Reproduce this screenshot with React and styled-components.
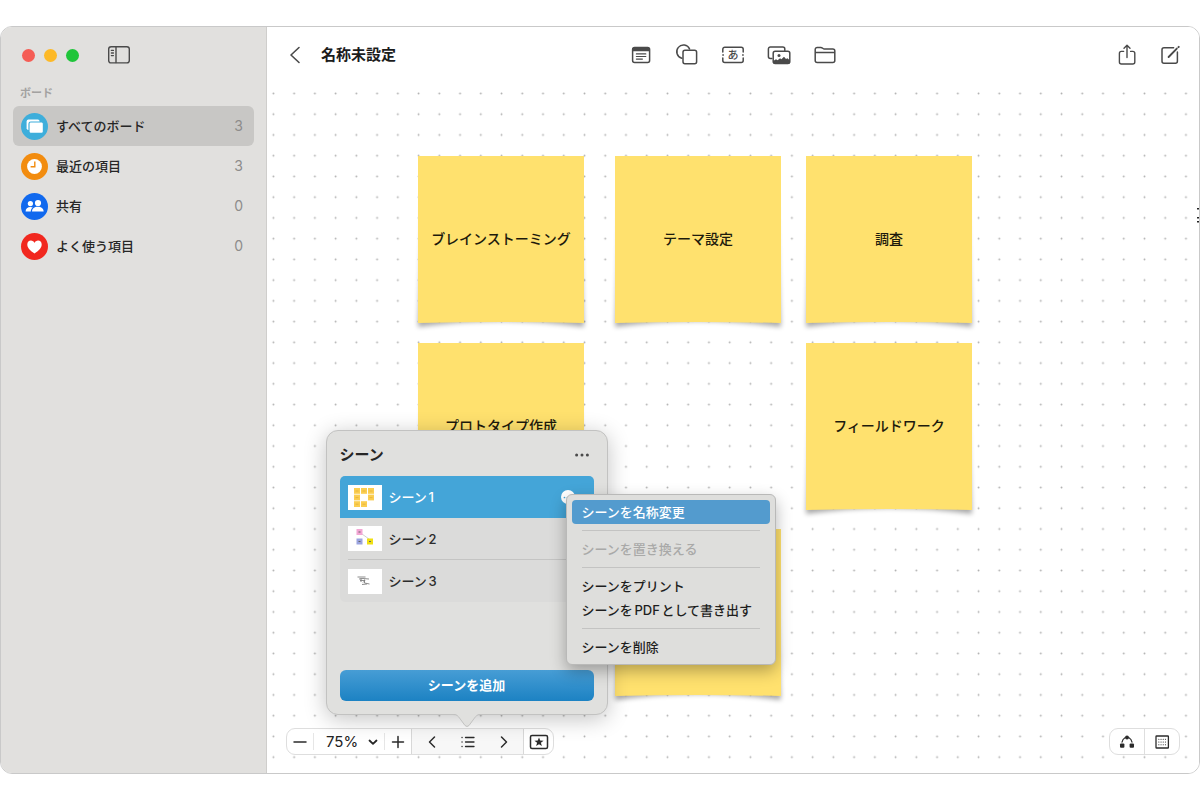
import React from 'react';
import styled, { createGlobalStyle, css } from 'styled-components';

const GlobalStyle = createGlobalStyle`
	*, *::before, *::after {
		box-sizing: border-box;
	}

	body {
		margin: 0;
		background: #fff;
		color: #262626;
		font-family: Inter, 'Noto Sans CJK JP', sans-serif;
		font-size: 13px;
		line-height: 20px;
		text-autospace: normal;
	}

	button, select {
		font: inherit;
		color: inherit;
		padding: 0;
		border: 0;
		background: none;
		text-autospace: normal;
	}

	h1, h2, ul, p {
		margin: 0;
		padding: 0;
		list-style: none;
	}

	svg {
		display: block;
	}
`;

const Page = styled.div`
	padding: 26px 0;
`;

const Window = styled.div`
	position: relative;
	display: flex;
	min-height: calc(100vh - 52px);
	border: 1px solid #c9c9c9;
	border-radius: 12px;
	overflow: hidden;
`;

// sidebar
const Sidebar = styled.nav`
	width: 266px;
	flex-shrink: 0;
	padding: 0 12px;
	background: #e1e0de;
	border-right: 1px solid #cfcecc;
`;

const SidebarTop = styled.div`
	display: flex;
	align-items: center;
	gap: 9px;
	height: 56px;
	padding-left: 9px;
`;

const TrafficLight = styled.button`
	width: 13px;
	height: 13px;
	border-radius: 50%;
	background: ${(props) => props.$color};
`;

const IconButton = styled.button`
	display: flex;
	align-items: center;
	justify-content: center;
	width: 24px;
	height: 24px;
	color: #4a4a4a;
`;

const SidebarToggle = styled(IconButton)`
	margin-left: 19px;
`;

const GroupLabel = styled.p`
	height: 23px;
	padding-left: 7px;
	font-size: 11px;
	font-weight: 700;
	color: #a3a2a1;
`;

const BoardButton = styled.button`
	display: flex;
	align-items: center;
	width: 100%;
	height: 40px;
	padding: 0 11px 0 8px;
	border-radius: 6px;
	text-align: left;
	font-weight: 500;
	background: ${(props) => (props.$active ? '#c8c7c5' : 'transparent')};
`;

const BoardIcon = styled.span`
	display: flex;
	width: 27px;
	height: 27px;
	border-radius: 50%;
	background: ${(props) => props.$color};
`;

const BoardName = styled.span`
	flex: 1;
	padding-left: 8px;
`;

const Count = styled.span`
	font-size: 14px;
	font-weight: 400;
	color: #8d8c8b;
`;

// main area
const Main = styled.main`
	flex: 1;
	display: flex;
	flex-direction: column;
	min-width: 0;
	background: #fff;
`;

const Toolbar = styled.header`
	display: grid;
	grid-template-columns: 1fr auto 1fr;
	align-items: center;
	height: 56px;
	padding: 0 17px 0 16px;
`;

const ToolbarGroup = styled.div`
	display: flex;
	align-items: center;
	gap: ${(props) => props.$gap}px;
	justify-content: ${(props) => props.$justify || 'flex-start'};
`;

const Title = styled.h1`
	font-size: 15px;
	font-weight: 700;
	color: #1c1c1c;
`;

const Canvas = styled.div`
	position: relative;
	flex: 1;
`;

const DotGrid = styled.svg`
	position: absolute;
	inset: 0;
	width: 100%;
	height: 100%;
`;

// tail of an item that runs past the right edge
const EdgeMarks = styled.svg`
	position: absolute;
	right: 0;
	top: 125px;
`;

const Note = styled.div`
	position: absolute;
	left: ${(props) => props.$x}px;
	top: ${(props) => props.$y}px;
	width: 166px;
	height: 167px;
`;

const NotePaper = styled.svg`
	position: absolute;
	left: -12px;
	top: -12px;
	overflow: visible;
`;

const NoteText = styled.p`
	position: relative;
	line-height: 166px;
	text-align: center;
	font-size: 14px;
	font-weight: 500;
	color: #1d1a0c;
`;

// bars floating over the bottom of the canvas
const BottomBar = styled.div`
	position: absolute;
	left: 19px;
	right: 19px;
	bottom: 18px;
	display: flex;
	justify-content: space-between;
`;

const Pill = styled.div`
	display: flex;
	height: 27px;
	border: 1px solid #dedede;
	border-radius: 9px;
	background: #fff;
`;

const PillButton = styled.button`
	display: flex;
	align-items: center;
	justify-content: center;
	width: ${(props) => props.$width}px;
	color: #2b2b2b;
	${(props) =>
		props.$divided &&
		css`
			border-right: 1px solid #dedede;
		`}
`;

const ZoomLabel = styled.label`
	position: relative;
	display: flex;
	align-items: center;
	width: 72px;
	margin: 4px 0;
	border-left: 1px solid #e6e6e6;
	border-right: 1px solid #e6e6e6;

	svg {
		position: absolute;
		right: 6px;
		pointer-events: none;
	}
`;

const ZoomSelect = styled.select`
	width: 100%;
	padding-left: 12px;
	appearance: none;
	font-size: 15px;
	color: #222;
`;

const SceneNav = styled.div`
	position: relative;
	display: flex;
	justify-content: center;
	width: 113px;
	background: #f7f7f7;
	border-left: 1px solid #d8d8d8;
	border-right: 1px solid #d8d8d8;
`;

const Popover = styled.section`
	position: absolute;
	left: 50%;
	bottom: 39px;
	width: 282px;
	height: 285px;
	margin-left: -142px;
	padding: 12px 13px 13px;
	display: flex;
	flex-direction: column;
	background: #e0e0de;
	border: 1px solid #c2c2c1;
	border-radius: 12px;
	box-shadow: 0 4px 22px rgba(0, 0, 0, 0.24);
`;

const PopoverArrow = styled.svg`
	position: absolute;
	left: 50%;
	top: 100%;
	margin: -1px 0 0 -14px;
`;

const PopoverHeader = styled.div`
	display: flex;
	align-items: center;
	justify-content: space-between;
	height: 24px;
	margin-bottom: 9px;

	h2 {
		font-size: 15px;
		font-weight: 700;
	}
`;

const SceneList = styled.ul`
	border-radius: 5px;
	background: #dbdbda;
`;

const SceneItem = styled.li`
	position: relative;
	height: 42px;
	padding: 0 8px;
	border-radius: ${(props) => (props.$active ? '5px 5px 0 0' : '0')};
	background: ${(props) => (props.$active ? '#44a5d8' : 'transparent')};
	color: ${(props) => (props.$active ? '#fff' : '#2c2c2c')};
`;

const SceneButton = styled.button`
	display: flex;
	align-items: center;
	gap: 7px;
	width: 100%;
	height: 42px;
	font-weight: 500;
	border-bottom: ${(props) => (props.$line ? '1px solid #c4c4c3' : '0')};
`;

const SceneMore = styled.button`
	position: absolute;
	right: 19px;
	top: 14px;
	display: flex;
	align-items: center;
	justify-content: center;
	width: 14px;
	height: 14px;
	border-radius: 50%;
	background: #fff;
	color: #44a5d8;
`;

const AddButton = styled.button`
	height: 31px;
	margin-top: auto;
	padding-bottom: 2px;
	border-radius: 6px;
	font-weight: 700;
	color: #fff;
	background: linear-gradient(#479dd5, #1c82c3);
`;

const Menu = styled.div`
	position: absolute;
	left: 226px;
	top: 18px;
	z-index: 1;
	width: 210px;
	padding: 5px;
	display: flex;
	flex-direction: column;
	background: #dededc;
	border: 1px solid #b9b9b8;
	border-radius: 6px;
	box-shadow: 0 6px 16px rgba(0, 0, 0, 0.3);
`;

const MenuItem = styled.button`
	height: 24px;
	padding: 0 10px;
	border-radius: 4px;
	text-align: left;
	white-space: nowrap;
	font-weight: 500;
	color: #1e1e1e;

	&:disabled {
		color: #a9a9a8;
	}

	${(props) =>
		props.$active &&
		css`
			background: #539bce;
			color: #fff;
		`}
`;

const MenuLine = styled.hr`
	width: 178px;
	height: 1px;
	margin: 6px 10px;
	border: 0;
	background: #c3c3c2;
`;

const Stroke = ({ width = 24, height = 24, weight = 1.5, children }) => (
	<svg
		width={width}
		height={height}
		viewBox={`0 0 ${width} ${height}`}
		fill="none"
		stroke="currentColor"
		strokeWidth={weight}
		strokeLinecap="round"
		strokeLinejoin="round"
	>
		{children}
	</svg>
);

const SidebarIcon = () => (
	<Stroke weight={1.4}>
		<rect x="1.7" y="3.7" width="20.6" height="16.2" rx="2.4" />
		<path d="M9 4v15.6M4.4 7.4h2M4.4 10h2M4.4 12.6h2" />
	</Stroke>
);

const NoteIcon = () => (
	<Stroke>
		<rect x="3.6" y="4.4" width="17" height="15" rx="2" />
		<path d="M4 5h16v3.2H4z" fill="currentColor" stroke="none" />
		<path d="M7.400 10.900h9.400M7.400 13.500h9.400M7.400 16.100h6" strokeWidth="1.200" />
	</Stroke>
);

const ShapesIcon = () => (
	<Stroke>
		<path d="M6.800 15.200A6.700 6.700 0 1 1 14.600 6" />
		<rect x="8" y="7.200" width="13.600" height="13.600" rx="2" />
	</Stroke>
);

const TextBoxIcon = () => (
	<Stroke>
		<path d="M1.800 9V6.200a2 2 0 0 1 2-2h16.400a2 2 0 0 1 2 2V9M1.800 15v2.600a2 2 0 0 0 2 2h16.400a2 2 0 0 0 2-2V15" />
		<path d="M1.800 12h.6M21.600 12h.6" />
		<text
			x="12"
			y="16"
			fontSize="11"
			fontWeight="500"
			textAnchor="middle"
			fill="currentColor"
			stroke="none"
		>
			あ
		</text>
	</Stroke>
);

const MediaIcon = () => (
	<Stroke>
		<path d="M4.800 15.600H3.400a2 2 0 0 1-2-2V6a2 2 0 0 1 2-2h12.400a2 2 0 0 1 2 2v1.600" />
		<rect x="6.200" y="8.200" width="16.600" height="12.400" rx="2" />
		<path
			d="M6.600 17.800l2.400-1.600 1.600 1 2.400-2 1.400 1 2.600-2.400 2 2.200 1.400-.8 2.400 2v3.400H6.600z"
			fill="currentColor"
			stroke="none"
		/>
		<circle cx="12" cy="12.400" r="1.500" fill="currentColor" stroke="none" />
	</Stroke>
);

const FolderIcon = () => (
	<Stroke>
		<path d="M2.200 17.400V6.400a2 2 0 0 1 2-2h3.600c1.800 0 2 1.600 3.600 1.600h8.400a2 2 0 0 1 2 2v9.400a2 2 0 0 1-2 2H4.200a2 2 0 0 1-2-2zM2.400 9.600h19.200" />
	</Stroke>
);

const ShareIcon = () => (
	<Stroke weight={1.4}>
		<path d="M8.600 8.400H6.400a2 2 0 0 0-2 2v8.600a2 2 0 0 0 2 2h11.400a2 2 0 0 0 2-2v-8.600a2 2 0 0 0-2-2h-2.200M12 14.600V2.400M9 5.200L12 2.200l3 3" />
	</Stroke>
);

const ComposeIcon = () => (
	<Stroke>
		<path d="M15.600 4.800H6a2 2 0 0 0-2 2v11.400a2 2 0 0 0 2 2h11.400a2 2 0 0 0 2-2V9" />
		<path d="M10.600 14l8.200-8.400M20.400 4.200l.4-.4" strokeWidth="1.900" />
	</Stroke>
);

const Dots = ({ size = 16 }) => (
	<svg width={size} height={size} viewBox="0 0 16 16" fill="currentColor">
		<circle cx="2.600" cy="8" r="1.500" />
		<circle cx="8" cy="8" r="1.500" />
		<circle cx="13.400" cy="8" r="1.500" />
	</svg>
);

const BoardsGlyph = () => (
	<svg width="27" height="27" viewBox="0 0 27 27">
		<rect x="5.600" y="6.600" width="13" height="10.400" rx="1.800" fill="#fff" />
		<rect
			x="8"
			y="9"
			width="14.400"
			height="11.400"
			rx="1.800"
			fill="#fff"
			stroke="#3eaedb"
			strokeWidth="1.200"
		/>
	</svg>
);

const ClockGlyph = () => (
	<svg width="27" height="27" viewBox="0 0 27 27">
		<circle cx="13.500" cy="13.500" r="7.400" fill="#fff" />
		<path d="M13.800 8.600v5.200H9.600" fill="none" stroke="#f28c0f" strokeWidth="1.400" />
	</svg>
);

const PeopleGlyph = () => (
	<svg width="27" height="27" viewBox="0 0 27 27" fill="#fff">
		<circle cx="9.400" cy="10.600" r="2.600" />
		<circle cx="17" cy="10" r="3.100" />
		<path d="M4.600 18.600c0-3 2-4.600 4.800-4.600 1 0 1.800.2 2.400.6-1.400 1-2 2.400-2 4z" />
		<path d="M11 18.600c0-3 2.400-4.800 5.800-4.800s5.800 1.800 5.800 4.800z" />
	</svg>
);

const HeartGlyph = () => (
	<svg width="27" height="27" viewBox="0 0 27 27" fill="#fff">
		<path d="M13.500 20.600C8.600 17.200 6.300 14.500 6.300 11.500c0-2.300 1.600-3.900 3.600-3.900 1.600 0 2.900.9 3.600 2.300.7-1.400 2-2.300 3.600-2.300 2 0 3.600 1.600 3.600 3.900 0 3-2.300 5.700-7.200 9.100z" />
	</svg>
);

const SceneThumb = ({ kind }) => (
	<svg width="34" height="25" viewBox="0 0 34 25">
		<rect width="34" height="25" fill="#fff" />
		{kind === 1 &&
			[
				[6, 3],
				[13, 3],
				[20, 3],
				[6, 9.6],
				[20, 9.6],
				[6, 16.2],
				[13, 16.2],
			].map(([x, y]) => (
				<g key={`${x}-${y}`}>
					<rect x={x} y={y} width="6" height="5.800" fill="#fbce50" />
					<path d={`M${x + 1.5} ${y + 3}h3`} stroke="#e3b03a" strokeWidth=".8" />
				</g>
			))}
		{kind === 2 && (
			<>
				<path d="M14 8l7 5" stroke="#bbb" strokeWidth=".7" />
				<rect x="8.500" y="3" width="6" height="6" fill="#f3a6d4" />
				<rect x="8.500" y="12.500" width="6" height="6" fill="#9ba4e0" />
				<rect x="19" y="12.500" width="6" height="6" fill="#f0e012" />
				<path d="M10.500 6h2M10.500 15.500h2M21 15.500h2" stroke="#666" strokeWidth="1.200" />
			</>
		)}
		{kind === 3 && (
			<path
				d="M9.500 8h8M11 10l4-.5 6 .5M13 9v4M12 11.500h5l-2 2M16.500 10.500v3.500l5 1M14 15.500l5-.5"
				fill="none"
				stroke="#808080"
				strokeWidth=".9"
			/>
		)}
	</svg>
);

const boards = [
	{ name: 'すべてのボード', count: 3, color: '#3eaedb', Glyph: BoardsGlyph },
	{ name: '最近の項目', count: 3, color: '#f28c0f', Glyph: ClockGlyph },
	{ name: '共有', count: 0, color: '#1169ee', Glyph: PeopleGlyph },
	{ name: 'よく使う項目', count: 0, color: '#f1281f', Glyph: HeartGlyph },
];

const tools = [
	{ name: '付箋', Icon: NoteIcon },
	{ name: '図形', Icon: ShapesIcon },
	{ name: 'テキスト', Icon: TextBoxIcon },
	{ name: 'メディア', Icon: MediaIcon },
	{ name: 'ファイル', Icon: FolderIcon },
];

// places on the free canvas
const notes = [
	{ text: 'ブレインストーミング', x: 151, y: 73 },
	{ text: 'テーマ設定', x: 348, y: 73 },
	{ text: '調査', x: 539, y: 73 },
	{ text: 'プロトタイプ作成', x: 151, y: 260 },
	{ text: 'フィールドワーク', x: 539, y: 260 },
	{ text: '', x: 348, y: 446 },
];

const StickyNote = ({ text, x, y }) => (
	<Note $x={x} $y={y}>
		<NotePaper width="190" height="195" aria-hidden="true">
			<path
				d="M18 20h154l6 163q-83-12-166 0z"
				fill="#000"
				opacity=".34"
				filter="url(#note-shadow)"
			/>
			<path d="M12 12h166v167q-83-2-166 0z" fill="#ffe16e" />
		</NotePaper>
		<NoteText>{text}</NoteText>
	</Note>
);

const ContextMenu = () => (
	<Menu role="menu">
		<MenuItem role="menuitem" $active>
			シーンを名称変更
		</MenuItem>
		<MenuLine />
		<MenuItem role="menuitem" disabled>
			シーンを置き換える
		</MenuItem>
		<MenuLine />
		<MenuItem role="menuitem">シーンをプリント</MenuItem>
		<MenuItem role="menuitem">シーンをPDFとして書き出す</MenuItem>
		<MenuLine />
		<MenuItem role="menuitem">シーンを削除</MenuItem>
	</Menu>
);

const ScenePopover = () => (
	<Popover>
		<PopoverHeader>
			<h2>シーン</h2>
			<IconButton aria-label="シーンのオプション">
				<Dots />
			</IconButton>
		</PopoverHeader>
		<SceneList>
			{[1, 2, 3].map((n) => (
				<SceneItem key={n} $active={n === 1}>
					<SceneButton $line={n === 2}>
						<SceneThumb kind={n} />
						<span>{`シーン${n}`}</span>
					</SceneButton>
					{n === 1 && (
						<>
							<SceneMore aria-label="シーン1のオプション">
								<Dots size={9} />
							</SceneMore>
							<ContextMenu />
						</>
					)}
				</SceneItem>
			))}
		</SceneList>
		<AddButton>シーンを追加</AddButton>
		<PopoverArrow width="28" height="16" viewBox="0 0 28 16">
			<path d="M0 0h28v1c-4 0-5 2-6.500 4L16 12.500q-2 2-4 0L6.500 5C5 3 4 1 0 1z" fill="#e0e0de" />
			<path
				d="M0 1.500c4 0 5 1.500 6.500 3.500L12 12.500q2 2 4 0L21.500 5c1.500-2 2.500-3.500 6.500-3.500"
				fill="none"
				stroke="#c2c2c1"
			/>
		</PopoverArrow>
	</Popover>
);

const App = () => {
	return (
		<Page>
			<GlobalStyle />
			<Window>
				<Sidebar>
					<SidebarTop>
						<TrafficLight $color="#f55d55" aria-label="閉じる" />
						<TrafficLight $color="#fdb927" aria-label="しまう" />
						<TrafficLight $color="#1fc53a" aria-label="拡大" />
						<SidebarToggle aria-label="サイドバー">
							<SidebarIcon />
						</SidebarToggle>
					</SidebarTop>
					<GroupLabel>ボード</GroupLabel>
					{boards.map(({ name, count, color, Glyph }, index) => (
						<BoardButton key={name} $active={index === 0}>
							<BoardIcon $color={color}>
								<Glyph />
							</BoardIcon>
							<BoardName>{name}</BoardName>
							<Count>{count}</Count>
						</BoardButton>
					))}
				</Sidebar>

				<Main>
					<Toolbar>
						<ToolbarGroup $gap={14}>
							<IconButton aria-label="戻る">
								<Stroke weight={1.6}>
									<path d="M16 4.500L8 12l8 7.500" />
								</Stroke>
							</IconButton>
							<Title>名称未設定</Title>
						</ToolbarGroup>
						<ToolbarGroup $gap={22}>
							{tools.map(({ name, Icon }) => (
								<IconButton key={name} aria-label={name}>
									<Icon />
								</IconButton>
							))}
						</ToolbarGroup>
						<ToolbarGroup $gap={19} $justify="flex-end">
							<IconButton aria-label="共有">
								<ShareIcon />
							</IconButton>
							<IconButton aria-label="新規ボード">
								<ComposeIcon />
							</IconButton>
						</ToolbarGroup>
					</Toolbar>

					<Canvas>
						<DotGrid aria-hidden="true">
							<defs>
								<pattern
									id="dots"
									x="-4"
									y="0.1"
									width="20.74"
									height="20.74"
									patternUnits="userSpaceOnUse"
								>
									<circle cx="10.400" cy="10.400" r=".95" fill="#b0b0b0" />
								</pattern>
								<filter id="note-shadow" x="-10%" y="-10%" width="120%" height="120%">
									<feGaussianBlur stdDeviation="2.800" />
								</filter>
							</defs>
							<rect width="100%" height="100%" fill="url(#dots)" />
						</DotGrid>
						{notes.map((note) => (
							<StickyNote key={`${note.x}-${note.y}`} {...note} />
						))}
						<EdgeMarks width="2" height="16" fill="#222" aria-hidden="true">
							<rect y="0" width="2" height="1.500" />
							<rect y="9" width="2" height="1.500" />
							<rect y="13" width="2" height="1.500" />
						</EdgeMarks>

						<BottomBar>
							<Pill>
								<PillButton $width={26} aria-label="縮小">
									<Stroke width={16} height={16}>
										<path d="M2 8h12" />
									</Stroke>
								</PillButton>
								<ZoomLabel>
									<ZoomSelect aria-label="倍率" defaultValue="75">
										<option value="75">75%</option>
										<option value="100">100%</option>
									</ZoomSelect>
									<Stroke width={10} height={10} weight={1.8}>
										<path d="M1.500 3.500L5 6.800l3.500-3.300" />
									</Stroke>
								</ZoomLabel>
								<PillButton $width={26} aria-label="拡大表示">
									<Stroke width={16} height={16}>
										<path d="M2.500 8h11M8 2.500v11" />
									</Stroke>
								</PillButton>
								<SceneNav>
									<PillButton $width={36} aria-label="前のシーン">
										<Stroke width={16} height={16}>
											<path d="M10.500 3L5.500 8l5 5" />
										</Stroke>
									</PillButton>
									<PillButton $width={36} aria-label="シーンのリスト">
										<Stroke width={16} height={16} weight={1.3}>
											<path d="M5.500 3.500h8.500M5.500 8h8.500M5.500 12.500h8.500M2 3.500h.1M2 8h.1M2 12.500h.1" />
										</Stroke>
									</PillButton>
									<PillButton $width={36} aria-label="次のシーン">
										<Stroke width={16} height={16}>
											<path d="M5.500 3l5 5-5 5" />
										</Stroke>
									</PillButton>
									<ScenePopover />
								</SceneNav>
								<PillButton $width={29} aria-label="シーンを保存">
									<Stroke width={20} height={16} weight={1.5}>
										<rect x="1.500" y="1.500" width="17" height="13" rx="1.500" />
										<path
											d="M10 3.400l1.200 3.200 3.400.1-2.700 2.100 1 3.300L10 10.200l-2.900 1.900 1-3.300-2.700-2.100 3.400-.1z"
											fill="currentColor"
											stroke="none"
										/>
									</Stroke>
								</PillButton>
							</Pill>

							<Pill>
								<PillButton $width={35} $divided aria-label="コネクタ">
									<Stroke width={16} height={16} weight={1.2}>
										<path d="M6 3.800C4.200 4.800 3.400 6.200 3 8.200M10 3.800c1.800 1 2.600 2.400 3 4.400" />
										<circle cx="8" cy="3.400" r="2" fill="currentColor" stroke="none" />
										<rect x="1" y="9.400" width="4.400" height="4.400" rx="1" fill="currentColor" stroke="none" />
										<rect x="10.600" y="9.400" width="4.400" height="4.400" rx="1" fill="currentColor" stroke="none" />
									</Stroke>
								</PillButton>
								<PillButton $width={34} aria-label="グリッド">
									<Stroke width={16} height={16} weight={1.3}>
										<rect x="2" y="2" width="12.400" height="12" rx=".6" />
										<path
											d="M4.800 5.200h7M4.800 8h7M4.800 10.800h7"
											strokeWidth="1.100"
											strokeDasharray=".1 2.100"
										/>
									</Stroke>
								</PillButton>
							</Pill>
						</BottomBar>
					</Canvas>
				</Main>
			</Window>
		</Page>
	);
};

export default App;
